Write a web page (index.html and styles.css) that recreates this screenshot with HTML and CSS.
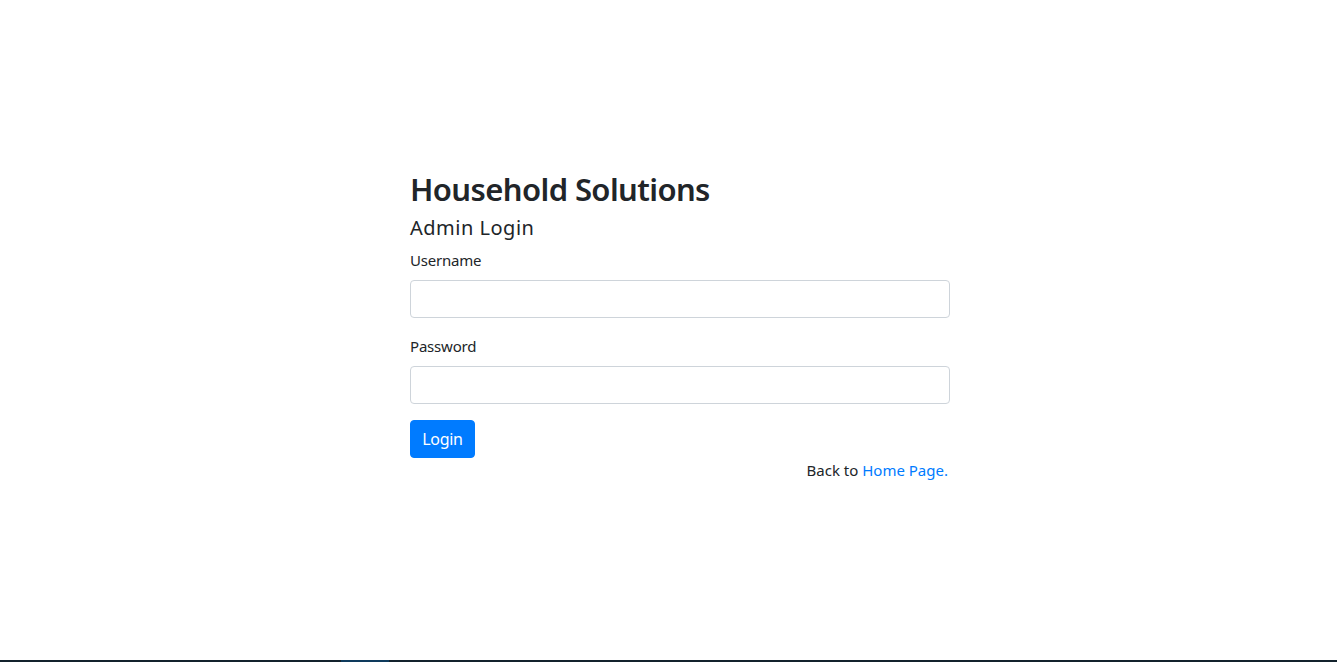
FILE: index.html
```html
<!DOCTYPE html>
<html lang="en">
<head>
<meta charset="utf-8">
<title>Admin Login - Household Solutions</title>
<link rel="stylesheet" href="styles.css">
</head>
<body>
<main class="page">
  <div class="login">
    <h2 class="title">Household Solutions</h2>
    <h5 class="subtitle">Admin Login</h5>
    <form class="form">
      <div class="form-group">
        <label class="label" for="username">Username</label>
        <input class="form-control" id="username" type="text">
      </div>
      <div class="form-group">
        <label class="label" for="password">Password</label>
        <input class="form-control" id="password" type="password">
      </div>
      <button class="btn" type="button">Login</button>
    </form>
    <p class="back">Back to <a href="#" class="link">Home Page.</a></p>
  </div>
</main>
<div class="taskbar"><span class="taskbar-item"></span></div>
</body>
</html>
```

FILE: styles.css
```css
* { box-sizing: border-box; }
html, body { margin: 0; padding: 0; height: 100%; }
body {
  font-family: "Noto Sans", "Open Sans", sans-serif;
  font-size: 16px;
  line-height: 1.5;
  color: #212529;
  background: #fff;
  display: flex;
  flex-direction: column;
}
.page {
  flex: 1;
  padding-top: 170px;
}
.login {
  width: 540px;
  margin-left: 410px;
}
.title {
  margin: 0 0 8px;
  font-size: 31px;
  height: 38px;
  font-weight: 600;
  letter-spacing: -0.6px;
  line-height: 38px;
}
.subtitle {
  margin: 0 0 8px;
  font-size: 20px;
  font-weight: 400;
  letter-spacing: 0.5px;
  line-height: 1.2;
}
.form { margin: 0; }
.form-group { margin-bottom: 16px; }
.label {
  display: block;
  margin-bottom: 8px;
  font-size: 15px;
  line-height: 24px;
  letter-spacing: -0.2px;
}
.form-control {
  display: block;
  width: 100%;
  height: 38px;
  padding: 6px 12px;
  border: 1px solid #ced4da;
  border-radius: 4px;
  font: inherit;
  background: #fff;
}
.btn {
  display: block;
  width: 65px;
  height: 38px;
  padding: 0;
  border: 1px solid #007bff;
  border-radius: 4px;
  background: #007bff;
  color: #fff;
  font: inherit;
  font-size: 16px;
  letter-spacing: -0.3px;
}
.back {
  margin: 0;
  text-align: right;
  padding-right: 2px;
  font-size: 15px;
  line-height: 24px;
}
.link { color: #007bff; text-decoration: none; }
.taskbar {
  height: 2px;
  background: #13222c;
  display: flex;
}
.taskbar-item {
  margin-left: 341px;
  width: 48px;
  background: #0e3a5c;
}
```
